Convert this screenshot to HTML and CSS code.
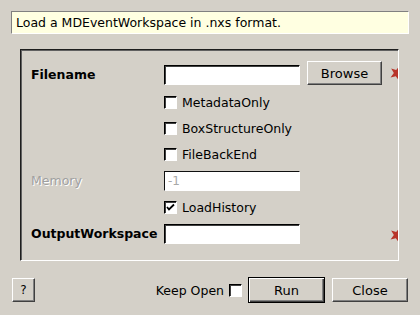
FILE: index.html
```html
<!DOCTYPE html>
<html lang="en">
<head>
    <meta charset="UTF-8">
    <title>LoadMD input dialog</title>
    <link rel="stylesheet" href="styles.css">
</head>
<body>
    <div class="dialog">
        <div class="description">Load a MDEventWorkspace in .nxs format.</div>

        <div class="group">
            <div class="form">
                <label class="prop-name">Filename</label>
                <input class="text-field" type="text">
                <button class="btn browse-btn">Browse</button>
                <span class="required">
                    <svg width="16" height="16" viewBox="0 0 16 16">
                        <polygon points="8,0.5 9.8,5.5 15,5.8 11,9 12.5,14.5 8,11.5 3.5,14.5 5,9 1,5.8 6.2,5.5" fill="#b8352a" transform="rotate(20 8 8)"/>
                    </svg>
                </span>

                <label class="check-row">
                    <span class="checkbox"></span>MetadataOnly
                </label>

                <label class="check-row">
                    <span class="checkbox"></span>BoxStructureOnly
                </label>

                <label class="check-row">
                    <span class="checkbox"></span>FileBackEnd
                </label>

                <label class="prop-name disabled">Memory</label>
                <input class="text-field disabled-field" type="text" value="-1" disabled>
                <span class="spacer"></span>

                <label class="check-row">
                    <span class="checkbox checked">
                        <svg width="9" height="9" viewBox="0 0 9 9">
                            <path d="M1 4 L3 6.5 L8 1.5" stroke="#000" stroke-width="1.8" fill="none"/>
                        </svg>
                    </span>LoadHistory
                </label>

                <label class="prop-name">OutputWorkspace</label>
                <input class="text-field" type="text">
                <span class="spacer"></span>
                <span class="required">
                    <svg width="16" height="16" viewBox="0 0 16 16">
                        <polygon points="8,0.5 9.8,5.5 15,5.8 11,9 12.5,14.5 8,11.5 3.5,14.5 5,9 1,5.8 6.2,5.5" fill="#b8352a" transform="rotate(20 8 8)"/>
                    </svg>
                </span>
            </div>
        </div>

        <div class="footer">
            <button class="btn help-btn">?</button>
            <div class="footer-right">
                <label class="keep-open">Keep Open <span class="checkbox"></span></label>
                <button class="btn run-btn">Run</button>
                <button class="btn close-btn">Close</button>
            </div>
        </div>
    </div>
</body>
</html>
```

FILE: styles.css
```css
body {
    margin: 0;
    background: #d4d0c8;
    font-family: 'DejaVu Sans', sans-serif;
    font-size: 12px;
    color: #000;
}

.dialog {
    width: 420px;
    height: 315px;
    padding: 11px 11px 0 11px;
    box-sizing: border-box;
}

.description {
    height: 23px;
    line-height: 22px;
    padding-left: 4px;
    background: #ffffe1;
    border-top: 1px solid #808080;
    border-left: 1px solid #808080;
    border-right: 1px solid #fff;
    border-bottom: 1px solid #fff;
    box-sizing: border-box;
    font-size: 12.5px;
}

.group {
    margin: 15px 10px 0 9px;
    height: 212px;
    box-sizing: border-box;
    border-top: 1px solid #1e1e1e;
    border-left: 1px solid #1e1e1e;
    border-right: 1px solid #fff;
    border-bottom: 1px solid #fff;
    box-shadow: inset 1px 1px 0 #606060;
    padding: 11px 0 0 10px;
    overflow: hidden;
}

.form {
    display: grid;
    grid-template-columns: 133px 136px 82px 17px;
    grid-template-rows: 24px 27px 26px 26px 27px 26px 27px;
}

.form > * {
    align-self: end;
}

.prop-name {
    font-weight: bold;
    font-size: 12.5px;
    height: 20px;
    line-height: 20px;
    white-space: nowrap;
}

.prop-name.disabled {
    font-weight: normal;
    color: #a0a0a0;
    text-shadow: 1px 1px 0 #fff;
}

.text-field {
    width: 136px;
    height: 20px;
    box-sizing: border-box;
    margin: 0;
    padding: 0 3px;
    background: #fff;
    border-style: solid;
    border-width: 1px;
    border-color: #000 #fff #fff #000;
    box-shadow: inset 1px 1px 0 #404040;
    font-family: 'DejaVu Sans', sans-serif;
    font-size: 12px;
    outline: none;
}

.disabled-field {
    color: #a8a8a8;
    box-shadow: none;
    border-color: #101010 #fff #fff #101010;
}

.btn {
    margin: 0;
    padding: 0;
    background: #d4d0c8;
    font-family: 'DejaVu Sans', sans-serif;
    font-size: 13px;
    color: #000;
    border-style: solid;
    border-width: 1px;
    border-color: #fff #404040 #404040 #fff;
    box-shadow: inset -1px -1px 0 #808080;
    box-sizing: border-box;
}

.browse-btn {
    width: 75px;
    height: 24px;
    margin-left: 7px;
    align-self: center;
}

.required {
    align-self: center;
    width: 16px;
    height: 16px;
    margin-left: 7px;
}

.required svg {
    display: block;
}

.form > .required:last-child {
    align-self: end;
    margin-bottom: 1px;
}

.check-row {
    grid-column: 2 / 5;
    display: flex;
    align-items: center;
    height: 20px;
    gap: 5px;
    font-size: 12.5px;
}

.checkbox {
    display: inline-flex;
    align-items: center;
    justify-content: center;
    width: 13px;
    height: 13px;
    box-sizing: border-box;
    background: #fff;
    border-style: solid;
    border-width: 1px;
    border-color: #000 #fff #fff #000;
    box-shadow: inset 1px 1px 0 #404040;
}

.checked svg {
    display: block;
}

.footer {
    display: flex;
    justify-content: space-between;
    align-items: center;
    margin-top: 16px;
    padding-right: 1px;
}

.help-btn {
    width: 23px;
    height: 24px;
    margin-left: 1px;
    font-size: 12px;
}

.footer-right {
    display: flex;
    align-items: center;
}

.keep-open {
    display: flex;
    align-items: center;
    gap: 5px;
    font-size: 12.5px;
    margin-right: 6px;
}

.run-btn {
    width: 77px;
    height: 26px;
    border: 1px solid #000;
    box-shadow: inset 1px 1px 0 #fff, inset -1px -1px 0 #404040, inset -2px -2px 0 #808080;
    margin-right: 7px;
}

.close-btn {
    width: 76px;
    height: 24px;
}
```
